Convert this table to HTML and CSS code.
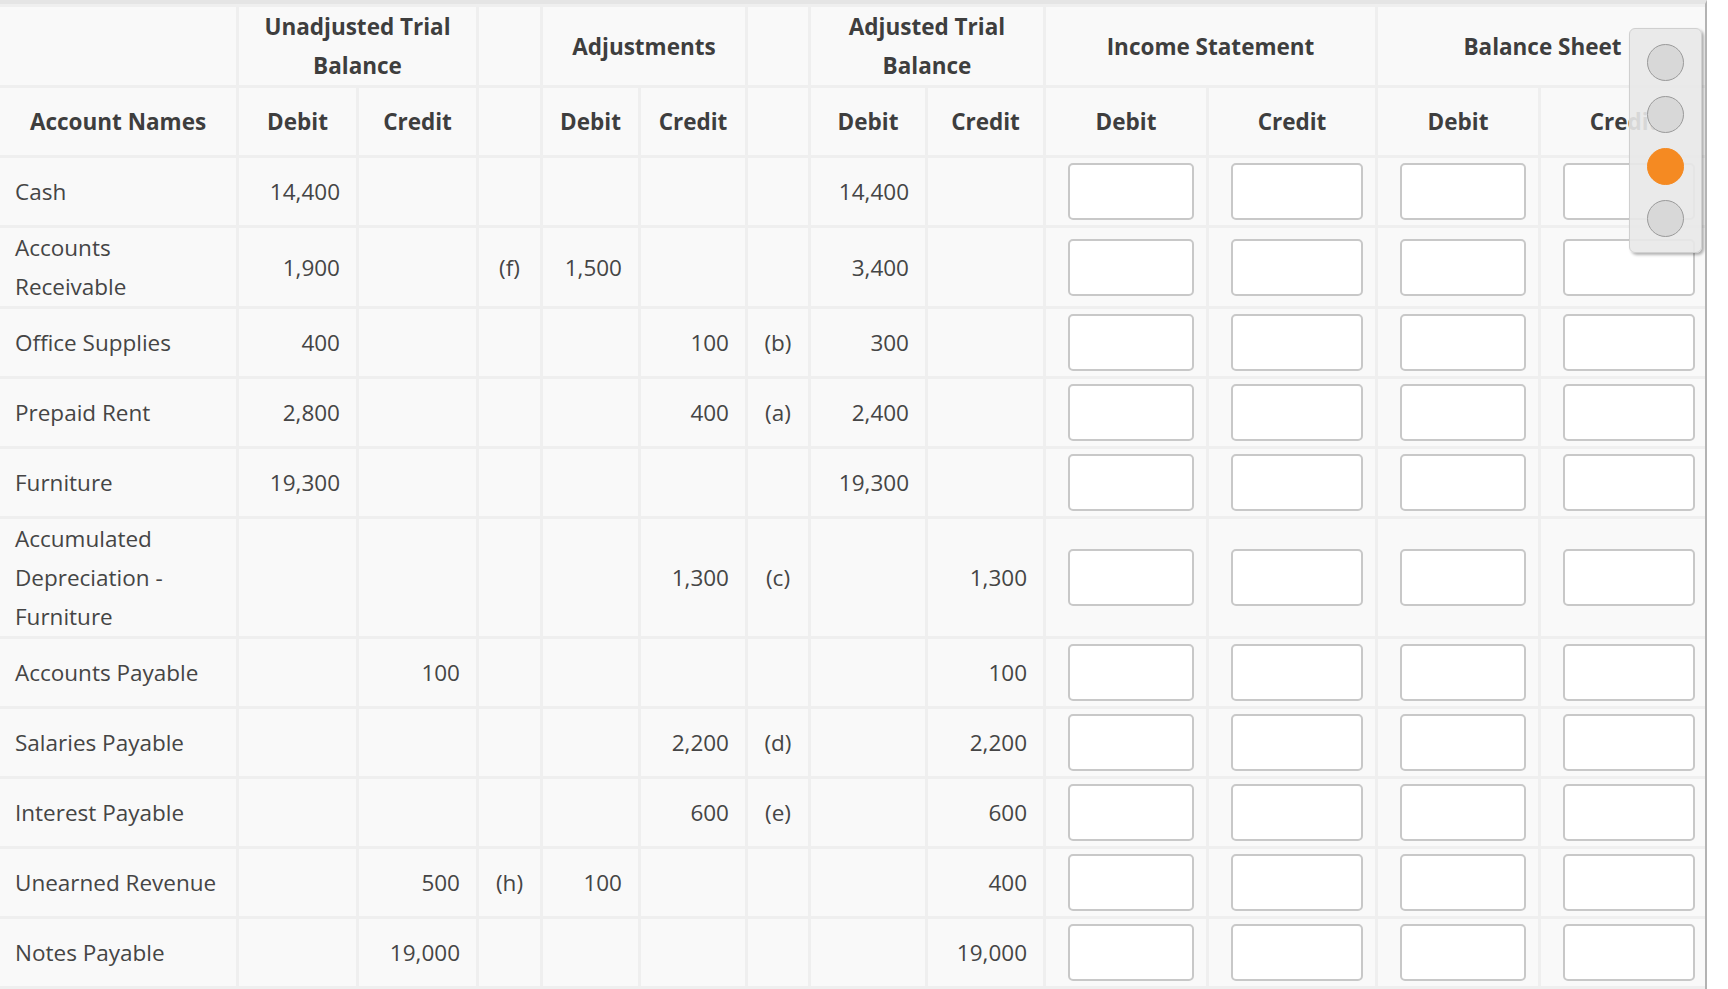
FILE: index.html
```html
<!DOCTYPE html>
<html lang="en">
<head>
<meta charset="utf-8">
<title>Worksheet</title>
<link rel="stylesheet" href="styles.css">
</head>
<body>
<div class="frame">
  <table class="sheet">
    <colgroup>
      <col class="c-name">
      <col class="c-utb-d">
      <col class="c-utb-c">
      <col class="c-ref">
      <col class="c-adj-d">
      <col class="c-adj-c">
      <col class="c-ref2">
      <col class="c-atb-d">
      <col class="c-atb-c">
      <col class="c-in-a">
      <col class="c-in-b">
      <col class="c-in-a">
      <col class="c-in-b">
    </colgroup>
    <thead>
      <tr class="group-row">
        <th></th>
        <th colspan="2">Unadjusted Trial Balance</th>
        <th></th>
        <th colspan="2">Adjustments</th>
        <th></th>
        <th colspan="2">Adjusted Trial Balance</th>
        <th colspan="2">Income Statement</th>
        <th colspan="2">Balance Sheet</th>
      </tr>
      <tr class="label-row">
        <th>Account Names</th>
        <th>Debit</th>
        <th>Credit</th>
        <th></th>
        <th>Debit</th>
        <th>Credit</th>
        <th></th>
        <th>Debit</th>
        <th>Credit</th>
        <th>Debit</th>
        <th>Credit</th>
        <th>Debit</th>
        <th>Credit</th>
      </tr>
    </thead>
    <tbody>
      <tr>
        <td class="name">Cash</td>
        <td class="num">14,400</td><td class="num"></td>
        <td class="ref"></td><td class="num"></td><td class="num"></td><td class="ref"></td>
        <td class="num">14,400</td><td class="num"></td>
        <td class="in"><input type="text"></td><td class="in"><input type="text"></td><td class="in"><input type="text"></td><td class="in"><input type="text"></td>
      </tr>
      <tr>
        <td class="name">Accounts Receivable</td>
        <td class="num">1,900</td><td class="num"></td>
        <td class="ref">(f)</td><td class="num">1,500</td><td class="num"></td><td class="ref"></td>
        <td class="num">3,400</td><td class="num"></td>
        <td class="in"><input type="text"></td><td class="in"><input type="text"></td><td class="in"><input type="text"></td><td class="in"><input type="text"></td>
      </tr>
      <tr>
        <td class="name">Office Supplies</td>
        <td class="num">400</td><td class="num"></td>
        <td class="ref"></td><td class="num"></td><td class="num">100</td><td class="ref">(b)</td>
        <td class="num">300</td><td class="num"></td>
        <td class="in"><input type="text"></td><td class="in"><input type="text"></td><td class="in"><input type="text"></td><td class="in"><input type="text"></td>
      </tr>
      <tr>
        <td class="name">Prepaid Rent</td>
        <td class="num">2,800</td><td class="num"></td>
        <td class="ref"></td><td class="num"></td><td class="num">400</td><td class="ref">(a)</td>
        <td class="num">2,400</td><td class="num"></td>
        <td class="in"><input type="text"></td><td class="in"><input type="text"></td><td class="in"><input type="text"></td><td class="in"><input type="text"></td>
      </tr>
      <tr>
        <td class="name">Furniture</td>
        <td class="num">19,300</td><td class="num"></td>
        <td class="ref"></td><td class="num"></td><td class="num"></td><td class="ref"></td>
        <td class="num">19,300</td><td class="num"></td>
        <td class="in"><input type="text"></td><td class="in"><input type="text"></td><td class="in"><input type="text"></td><td class="in"><input type="text"></td>
      </tr>
      <tr>
        <td class="name">Accumulated Depreciation - Furniture</td>
        <td class="num"></td><td class="num"></td>
        <td class="ref"></td><td class="num"></td><td class="num">1,300</td><td class="ref">(c)</td>
        <td class="num"></td><td class="num">1,300</td>
        <td class="in"><input type="text"></td><td class="in"><input type="text"></td><td class="in"><input type="text"></td><td class="in"><input type="text"></td>
      </tr>
      <tr>
        <td class="name">Accounts Payable</td>
        <td class="num"></td><td class="num">100</td>
        <td class="ref"></td><td class="num"></td><td class="num"></td><td class="ref"></td>
        <td class="num"></td><td class="num">100</td>
        <td class="in"><input type="text"></td><td class="in"><input type="text"></td><td class="in"><input type="text"></td><td class="in"><input type="text"></td>
      </tr>
      <tr>
        <td class="name">Salaries Payable</td>
        <td class="num"></td><td class="num"></td>
        <td class="ref"></td><td class="num"></td><td class="num">2,200</td><td class="ref">(d)</td>
        <td class="num"></td><td class="num">2,200</td>
        <td class="in"><input type="text"></td><td class="in"><input type="text"></td><td class="in"><input type="text"></td><td class="in"><input type="text"></td>
      </tr>
      <tr>
        <td class="name">Interest Payable</td>
        <td class="num"></td><td class="num"></td>
        <td class="ref"></td><td class="num"></td><td class="num">600</td><td class="ref">(e)</td>
        <td class="num"></td><td class="num">600</td>
        <td class="in"><input type="text"></td><td class="in"><input type="text"></td><td class="in"><input type="text"></td><td class="in"><input type="text"></td>
      </tr>
      <tr>
        <td class="name">Unearned Revenue</td>
        <td class="num"></td><td class="num">500</td>
        <td class="ref">(h)</td><td class="num">100</td><td class="num"></td><td class="ref"></td>
        <td class="num"></td><td class="num">400</td>
        <td class="in"><input type="text"></td><td class="in"><input type="text"></td><td class="in"><input type="text"></td><td class="in"><input type="text"></td>
      </tr>
      <tr>
        <td class="name">Notes Payable</td>
        <td class="num"></td><td class="num">19,000</td>
        <td class="ref"></td><td class="num"></td><td class="num"></td><td class="ref"></td>
        <td class="num"></td><td class="num">19,000</td>
        <td class="in"><input type="text"></td><td class="in"><input type="text"></td><td class="in"><input type="text"></td><td class="in"><input type="text"></td>
      </tr>
    </tbody>
  </table>

  <div class="stepper">
    <span class="dot"></span>
    <span class="dot"></span>
    <span class="dot active"></span>
    <span class="dot"></span>
  </div>
</div>
</body>
</html>
```
FILE: styles.css
```css
html, body {
  margin: 0;
  padding: 0;
  background: #ffffff;
}

body {
  font-family: "Open Sans", "Liberation Sans", sans-serif;
  color: #444444;
}

.frame {
  position: relative;
  width: 1705px;
  height: 985px;
  border-top: 4px solid #e5e5e5;
  border-right: 2px solid #b3b3b3;
  overflow: hidden;
  background: #efefef;
}

.sheet {
  table-layout: fixed;
  border-collapse: separate;
  border-spacing: 3px;
  background: #efefef;
  width: 1711px;
  margin: 0 0 0 -3px;
  font-size: 22.5px;
  line-height: 39px;
}

.c-name { width: 236px; }
.c-utb-d { width: 117px; }
.c-utb-c { width: 117px; }
.c-ref { width: 61px; }
.c-adj-d { width: 95px; }
.c-adj-c { width: 104px; }
.c-ref2 { width: 60px; }
.c-atb-d { width: 114px; }
.c-atb-c { width: 115px; }
.c-in-a { width: 160px; }
.c-in-b { width: 166px; }

.sheet th,
.sheet td {
  background: #f9f9f9;
  vertical-align: middle;
}

.sheet th {
  font-weight: 700;
  color: #3e3e3e;
  text-align: center;
  padding: 0 12px;
}

.label-row th {
  height: 67px;
}

.sheet td {
  padding: 0 16px 0 15px;
  color: #454545;
}

.sheet td.name {
  text-align: left;
}

.sheet td.num {
  text-align: right;
}

.sheet td.ref {
  text-align: center;
  padding: 0 4px;
}

.sheet td.in {
  padding: 5px 12px 5px 22px;
}

.sheet input {
  display: block;
  width: 100%;
  height: 57px;
  box-sizing: border-box;
  margin: 0;
  border: 2px solid #c8c8c8;
  border-radius: 5px;
  background: #ffffff;
  font: inherit;
  padding: 0 8px;
}

.stepper {
  position: absolute;
  left: 1629px;
  top: 24px;
  width: 73px;
  height: 225px;
  box-sizing: border-box;
  padding: 15px 0 0 0;
  display: flex;
  flex-direction: column;
  align-items: center;
  gap: 15px;
  background: rgba(232, 232, 232, 0.9);
  border: 1px solid #d0d0d0;
  border-radius: 6px;
  box-shadow: 2px 2px 3px rgba(0, 0, 0, 0.3);
}

.dot {
  display: block;
  width: 37px;
  height: 37px;
  box-sizing: border-box;
  border-radius: 50%;
  background: #d8d8d8;
  border: 1px solid #9a9a9a;
}

.dot.active {
  background: #f58a22;
  border-color: #f58a22;
}
```
